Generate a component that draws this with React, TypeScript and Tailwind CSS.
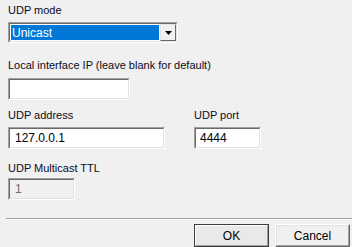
import React from "react";

const font = { fontFamily: '"Liberation Sans", Arial, sans-serif' };

function Sunken({
  className,
  disabled,
  children,
}: {
  className: string;
  disabled?: boolean;
  children?: React.ReactNode;
}) {
  return (
    <div
      className={`border border-t-[#a0a0a0] border-l-[#a0a0a0] border-b-white border-r-white ${className}`}
    >
      <div
        className={`h-full border border-t-[#696969] border-l-[#696969] border-b-[#e3e3e3] border-r-[#e3e3e3] flex items-center ${
          disabled ? "bg-[#f0f0f0]" : "bg-white"
        }`}
      >
        {children}
      </div>
    </div>
  );
}

function Label({ text }: { text: string }) {
  return <div className="text-[11px] leading-[13px] text-[#0b0b20]">{text}</div>;
}

export default function App() {
  return (
    <div
      className="w-[352px] h-[247px] bg-[#f0f0f0] overflow-hidden flex flex-col"
      style={font}
    >
      <div className="pl-[8px] pt-[4px] flex flex-col">
        <Label text="UDP mode" />
        <Sunken className="mt-[5px] w-[170px] h-[21px]">
          <div className="flex-1 h-full p-[1px] flex">
            <div className="flex-1 bg-[#0078d7] text-white text-[12px] leading-[16px] pl-[1px]">
              Unicast
            </div>
          </div>
          <div className="w-[16px] h-full border border-t-[#e3e3e3] border-l-[#e3e3e3] border-b-[#696969] border-r-[#696969] bg-[#f0f0f0] flex items-center justify-center">
            <svg width="7" height="4" viewBox="0 0 7 4">
              <path d="M0 0H7L3.5 4Z" fill="#000" />
            </svg>
          </div>
        </Sunken>

        <div className="mt-[16px]">
          <Label text="Local interface IP (leave blank for default)" />
        </div>
        <Sunken className="mt-[6px] w-[122px] h-[22px]" />

        <div className="mt-[9px] flex">
          <div className="w-[186px] flex flex-col">
            <Label text="UDP address" />
            <Sunken className="mt-[5px] w-[157px] h-[22px]">
              <span className="pl-[5px] text-[12px] text-black">127.0.0.1</span>
            </Sunken>
          </div>
          <div className="flex flex-col">
            <Label text="UDP port" />
            <Sunken className="mt-[5px] w-[67px] h-[22px]">
              <span className="pl-[4px] text-[12px] text-black">4444</span>
            </Sunken>
          </div>
        </div>

        <div className="mt-[13px]">
          <Label text="UDP Multicast TTL" />
        </div>
        <Sunken className="mt-[3px] w-[67px] h-[22px]" disabled>
          <span className="pl-[5px] text-[12px] text-[#6d6d6d]">1</span>
        </Sunken>
      </div>

      <div className="mt-[18px] ml-[6px] border-t border-[#a0a0a0] border-b border-b-white" />

      <div className="mt-[4px] flex justify-end gap-[6px] pr-[2px]">
        <div className="w-[75px] h-[23px] border border-[#3c3c3c] bg-[#e9e9e9]">
          <div className="h-full border border-t-white border-l-white border-b-[#a0a0a0] border-r-[#a0a0a0] flex items-center justify-center text-[12px] text-black">
            OK
          </div>
        </div>
        <div className="w-[75px] h-[23px] border border-t-white border-l-white border-b-[#696969] border-r-[#696969] bg-[#f0f0f0]">
          <div className="h-full border border-t-[#e3e3e3] border-l-[#e3e3e3] border-b-[#a0a0a0] border-r-[#a0a0a0] flex items-center justify-center text-[12px] text-black">
            Cancel
          </div>
        </div>
      </div>
    </div>
  );
}
